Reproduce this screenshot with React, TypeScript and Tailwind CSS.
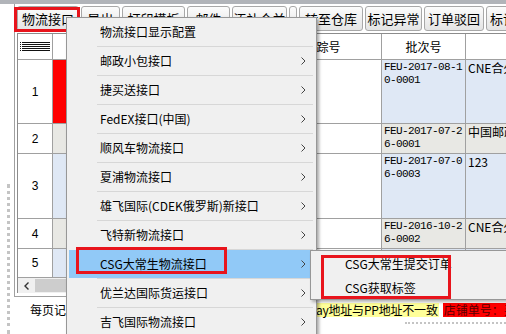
import React from 'react';

const TOOLS = [
  { t: '物流接口', w: 'w-[62px]' },
  { t: '导出', w: 'w-[39px]' },
  { t: '打印模板', w: 'w-[63px]' },
  { t: '邮件', w: 'w-[43px]' },
  { t: '添补合并', w: 'w-[55px]' },
  { t: '', w: 'w-[8px]' },
  { t: '转至仓库', w: 'w-[64px]' },
  { t: '标记异常', w: 'w-[57px]' },
  { t: '订单驳回', w: 'w-[60px]' },
  { t: '标记发货', w: 'w-[60px]' },
];

const MENU = [
  { t: '物流接口显示配置', sub: false },
  { t: '邮政小包接口', sub: true },
  { t: '捷买送接口', sub: true },
  { t: 'FedEX接口(中国)', sub: true },
  { t: '顺风车物流接口', sub: true },
  { t: '夏浦物流接口', sub: true },
  { t: '雄飞国际(CDEK俄罗斯)新接口', sub: true },
  { t: '飞特新物流接口', sub: true },
  { t: 'CSG大常生物流接口', sub: true, on: true },
  { t: '优兰达国际货运接口', sub: true },
  { t: '吉飞国际物流接口', sub: true },
];

const ROWS = [
  { n: '1', h: 'h-[64px]', mark: 'bg-[#ff0000]', bg: 'bg-[#dfe8f5]', batch: ['FEU-2017-08-1', '0-0001'], way: 'CNE合久全球经济' },
  { n: '2', h: 'h-[30px]', mark: 'bg-[#e8e8e4]', bg: 'bg-[#e8e8e4]', batch: ['FEU-2017-07-2', '6-0001'], way: '中国邮政小包' },
  { n: '3', h: 'h-[65px]', mark: 'bg-[#dfe8f5]', bg: 'bg-[#dfe8f5]', batch: ['FEU-2017-07-0', '6-0003'], way: '123' },
  { n: '4', h: 'h-[30px]', mark: 'bg-[#e8e8e4]', bg: 'bg-[#e8e8e4]', batch: ['FEU-2016-10-2', '6-0002'], way: 'CNE合久全球经济' },
  { n: '5', h: 'h-[29px]', mark: 'bg-[#dfe8f5]', bg: 'bg-[#dfe8f5]', batch: [], way: '' },
];

function Chevron() {
  return (
    <svg width="5" height="8" viewBox="0 0 5 8" className="shrink-0">
      <path d="M0.5 0.5L4 4L0.5 7.5" stroke="#444" strokeWidth="1" fill="none" />
    </svg>
  );
}

function GridIcon() {
  return (
    <svg width="30" height="10" viewBox="0 0 30 10">
      {[0, 2, 4, 6, 8].map((y) => (
        <rect key={y} x="0" y={y} width="30" height="1" fill="#111" />
      ))}
      {[0, 2, 4, 6, 8].map((y) => (
        <rect key={'w' + y} x="1" y={y} width="1" height="1" fill="#fff" />
      ))}
    </svg>
  );
}

export default function App() {
  const cell = 'border-r border-b border-[#a0a0a0] shrink-0';
  return (
    <div className="relative w-[506px] h-[334px] overflow-hidden bg-white text-[12px] text-black font-['Noto_Sans_CJK_SC',sans-serif]">
      <div className="h-[4px] bg-[#b1b4b9]" />
      <div className="flex h-[330px]">
        {/* left strip with splitter grip */}
        <div className="w-[14px] shrink-0 pt-[180px] pl-[7px]">
          <div className="h-full border-l-[3px] border-dotted border-[#c4c4c4]" />
        </div>

        <div className="flex-1 min-w-0 flex flex-col">
          <div className="flex flex-col border-l border-b border-[#a0a0a0] pl-[2px] pb-[3px]">
            {/* toolbar */}
            <div className="h-[29px] pt-[2px] flex gap-[2px] items-start whitespace-nowrap">
              {TOOLS.map((b, i) => (
                <div
                  key={i}
                  className={`${b.w} shrink-0 h-[25px] rounded-[3px] border border-[#a8a8a8] bg-linear-to-b from-[#fcfcfc] to-[#e4e4e4] flex items-center justify-center text-[13px] leading-none overflow-hidden`}
                >
                  {b.t}
                </div>
              ))}
            </div>

            {/* grid */}
            <div className="border-l border-t border-[#8c8c8c] flex flex-col overflow-hidden">
              <div className="flex h-[26px]">
                <div className={`${cell} w-[35px] flex items-center justify-center`}>
                  <GridIcon />
                </div>
                <div className={`${cell} w-[14px]`} />
                <div className={`${cell} w-[197px] flex items-center justify-center`}>订单编号</div>
                <div className={`${cell} w-[118px] flex items-center justify-center`}>跟踪号</div>
                <div className={`${cell} w-[84px] flex items-center justify-center`}>批次号</div>
                <div className={`${cell} w-[140px] flex items-center justify-center`}>物流方式</div>
              </div>
              {ROWS.map((r) => (
                <div key={r.n} className={`flex ${r.h}`}>
                  <div className={`${cell} w-[35px] flex items-center justify-center font-['Liberation_Sans',sans-serif]`}>
                    {r.n}
                  </div>
                  <div className={`${cell} w-[14px] ${r.mark}`} />
                  <div className={`${cell} w-[197px] ${r.bg}`} />
                  <div className={`${cell} w-[118px] bg-white`} />
                  <div className={`${cell} w-[84px] ${r.bg} pl-[2px] pt-[1px] font-['Liberation_Mono',monospace] text-[11px] tracking-[-0.6px] leading-[13px]`}>
                    {r.batch.map((l) => (
                      <div key={l}>{l}</div>
                    ))}
                  </div>
                  <div className={`${cell} w-[140px] ${r.bg} pl-[2px] pt-[1px] leading-[13px] whitespace-nowrap overflow-hidden`}>
                    {r.way}
                  </div>
                </div>
              ))}
              {/* horizontal scrollbar */}
              <div className="h-[15px] flex bg-[#f0f0f0]">
                <div className="w-[17px] flex items-center justify-center">
                  <svg width="5" height="8" viewBox="0 0 5 8">
                    <path d="M4.5 0.5L1 4L4.5 7.5" stroke="#333" strokeWidth="1.4" fill="none" />
                  </svg>
                </div>
                <div className="w-[230px] my-[1px] bg-[#cdcdcd]" />
              </div>
            </div>
          </div>

          {/* footer */}
          <div className="flex flex-col">
            <div className="flex items-center h-[20px] mt-[3px] pl-[16px] whitespace-nowrap">
              <div className="w-[271px] shrink-0">每页记录数：20</div>
              <div className="bg-[#ffff99] h-[14px] leading-[14px] px-[1px] tracking-[-0.2px]">Ebay地址与PP地址不一致</div>
              <div className="ml-[4px] bg-[#ff0000] text-[#5a0000] h-[14px] leading-[14px] px-[1px]">店铺单号：买家留言</div>
            </div>
            <div className="ml-[391px] mt-[2px] border-t-2 border-dotted border-[#c4c4c4]" />
          </div>
        </div>
      </div>

      {/* red marker on toolbar button */}
      <div className="absolute left-[14px] top-[7px] w-[66px] h-[25px] border-[3px] border-[#e8141c]" />

      {/* context menu */}
      <div className="absolute left-[66px] top-[17px] w-[251px] h-[330px] bg-[#f0f0f0] border border-[#979797] shadow-[2px_2px_3px_rgba(0,0,0,0.35)] flex flex-col">
        {MENU.map((m, i) => (
          <React.Fragment key={m.t}>
            {i > 0 && <div className="h-[1px] shrink-0 ml-[30px] mr-[3px] bg-[#d7d7d7]" />}
            <div className="h-[28px] shrink-0 px-[2px]">
              <div className={`h-full flex items-center pl-[31px] pr-[8px] ${m.on ? 'bg-[#91c9f7]' : ''}`}>
                <span className="flex-1 whitespace-nowrap">{m.t}</span>
                {m.sub && <Chevron />}
              </div>
            </div>
          </React.Fragment>
        ))}
      </div>

      {/* red marker on menu item */}
      <div className="absolute left-[76px] top-[247px] w-[151px] h-[27px] border-[3px] border-[#e8141c]" />

      {/* submenu */}
      <div className="absolute left-[310px] top-[250px] w-[210px] h-[50px] bg-[#f0f0f0] border border-[#979797] shadow-[2px_2px_3px_rgba(0,0,0,0.3)] pt-[1px]">
        <div className="h-[24px] flex items-center pl-[34px] whitespace-nowrap">CSG大常生提交订单</div>
        <div className="h-[24px] flex items-center pl-[34px] whitespace-nowrap">CSG获取标签</div>
      </div>

      {/* red marker on submenu */}
      <div className="absolute left-[321px] top-[255px] w-[130px] h-[44px] border-[3px] border-[#e8141c]" />
    </div>
  );
}
